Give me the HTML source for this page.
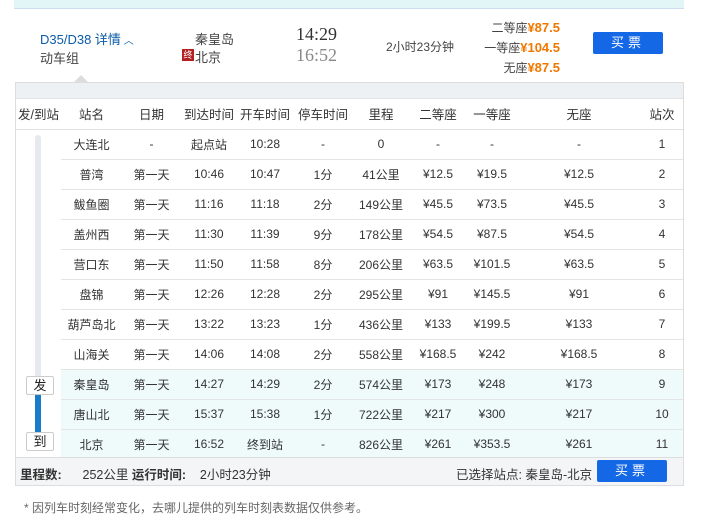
<!DOCTYPE html>
<html><head><meta charset="utf-8"><style>
*{margin:0;padding:0;box-sizing:border-box}
body{width:707px;height:511px;background:#fff;font-family:"Liberation Sans","Noto Sans CJK SC",sans-serif;font-size:12px;color:#333;position:relative;overflow:hidden}
.abs{position:absolute}
.topbar{left:14px;top:0;width:670px;height:9px;background:#e3f6f7;border-bottom:1px solid #cde}
.btn{background:#1468e6;color:#fff;border-radius:2px;text-align:center;font-size:13px;letter-spacing:4px}
.panel{left:15px;top:82px;width:669px;height:404px;border:1px solid #ddd;background:#fff}
.strip{left:0;top:0;width:667px;height:16px;background:#eef1f3;border-bottom:1px solid #e2e2e2}
table{position:absolute;left:0;top:16px;border-collapse:collapse;table-layout:fixed;width:667px}
td{height:30px;text-align:center;font-size:12px;color:#333;white-space:nowrap;padding:0}
tr.r td.d{border-top:1px solid #e4e4e4}
tr.h td{border-bottom:1px solid #e0e0e0;height:30px;font-size:12.5px}
tr.sel td.d{background:#effbfb}
.foot{left:0;top:374px;width:667px;height:28px;background:#f3f5f6;border-top:1px solid #ddd}
.tag{width:28px;height:19px;background:#fff;border:1px solid #ccc;border-radius:2px;font-size:13px;text-align:center;line-height:17px;color:#222}
</style></head><body>
<div class="abs topbar"></div>
<div class="abs" style="left:40px;top:29px;color:#0b5ba8;font-size:13px">D35/D38 详情<span style="font-size:10px"> ︿</span></div>
<div class="abs" style="left:40px;top:48px;font-size:13px;color:#444">动车组</div>
<div class="abs" style="left:195px;top:29px;font-size:13px;color:#444">秦皇岛</div>
<div class="abs" style="left:182px;top:49px;width:12px;height:12px;background:#b42020;color:#fff;font-size:9px;line-height:12px;text-align:center">终</div>
<div class="abs" style="left:195px;top:47px;font-size:13px;color:#444">北京</div>
<div class="abs" style="left:296px;top:24px;font-family:'Liberation Serif',serif;font-size:18px;color:#333">14:29</div>
<div class="abs" style="left:296px;top:45px;font-family:'Liberation Serif',serif;font-size:18px;color:#888">16:52</div>
<div class="abs" style="left:386px;top:38px;font-size:12px;color:#444">2小时23分钟</div>
<div class="abs" style="left:460px;top:18px;width:100px;text-align:right;line-height:19px;font-size:12px;color:#444">二等座<b style="color:#f07800;font-size:13px">¥87.5</b><br>一等座<b style="color:#f07800;font-size:13px">¥104.5</b><br>无座<b style="color:#f07800;font-size:13px">¥87.5</b></div>
<div class="abs btn" style="left:593px;top:32px;width:70px;height:22px;line-height:22px">买票</div>
<div class="abs" style="left:74px;top:75px;width:0;height:0;border-left:7px solid transparent;border-right:7px solid transparent;border-bottom:7px solid #ddd"></div>
<div class="abs panel">
<div class="abs strip"></div>
<table>
<colgroup><col style="width:45px"><col style="width:61px"><col style="width:59px"><col style="width:56px"><col style="width:56px"><col style="width:60px"><col style="width:56px"><col style="width:58px"><col style="width:50px"><col style="width:124px"><col style="width:42px"></colgroup>
<tr class="h"><td>发/到站</td><td>站名</td><td>日期</td><td>到达时间</td><td>开车时间</td><td>停车时间</td><td>里程</td><td>二等座</td><td>一等座</td><td>无座</td><td>站次</td></tr>
<tr><td></td><td class="d">大连北</td><td class="d">-</td><td class="d">起点站</td><td class="d">10:28</td><td class="d">-</td><td class="d">0</td><td class="d">-</td><td class="d">-</td><td class="d">-</td><td class="d">1</td></tr>
<tr class="r"><td></td><td class="d">普湾</td><td class="d">第一天</td><td class="d">10:46</td><td class="d">10:47</td><td class="d">1分</td><td class="d">41公里</td><td class="d">¥12.5</td><td class="d">¥19.5</td><td class="d">¥12.5</td><td class="d">2</td></tr>
<tr class="r"><td></td><td class="d">鲅鱼圈</td><td class="d">第一天</td><td class="d">11:16</td><td class="d">11:18</td><td class="d">2分</td><td class="d">149公里</td><td class="d">¥45.5</td><td class="d">¥73.5</td><td class="d">¥45.5</td><td class="d">3</td></tr>
<tr class="r"><td></td><td class="d">盖州西</td><td class="d">第一天</td><td class="d">11:30</td><td class="d">11:39</td><td class="d">9分</td><td class="d">178公里</td><td class="d">¥54.5</td><td class="d">¥87.5</td><td class="d">¥54.5</td><td class="d">4</td></tr>
<tr class="r"><td></td><td class="d">营口东</td><td class="d">第一天</td><td class="d">11:50</td><td class="d">11:58</td><td class="d">8分</td><td class="d">206公里</td><td class="d">¥63.5</td><td class="d">¥101.5</td><td class="d">¥63.5</td><td class="d">5</td></tr>
<tr class="r"><td></td><td class="d">盘锦</td><td class="d">第一天</td><td class="d">12:26</td><td class="d">12:28</td><td class="d">2分</td><td class="d">295公里</td><td class="d">¥91</td><td class="d">¥145.5</td><td class="d">¥91</td><td class="d">6</td></tr>
<tr class="r"><td></td><td class="d">葫芦岛北</td><td class="d">第一天</td><td class="d">13:22</td><td class="d">13:23</td><td class="d">1分</td><td class="d">436公里</td><td class="d">¥133</td><td class="d">¥199.5</td><td class="d">¥133</td><td class="d">7</td></tr>
<tr class="r"><td></td><td class="d">山海关</td><td class="d">第一天</td><td class="d">14:06</td><td class="d">14:08</td><td class="d">2分</td><td class="d">558公里</td><td class="d">¥168.5</td><td class="d">¥242</td><td class="d">¥168.5</td><td class="d">8</td></tr>
<tr class="r sel"><td></td><td class="d">秦皇岛</td><td class="d">第一天</td><td class="d">14:27</td><td class="d">14:29</td><td class="d">2分</td><td class="d">574公里</td><td class="d">¥173</td><td class="d">¥248</td><td class="d">¥173</td><td class="d">9</td></tr>
<tr class="r sel"><td></td><td class="d">唐山北</td><td class="d">第一天</td><td class="d">15:37</td><td class="d">15:38</td><td class="d">1分</td><td class="d">722公里</td><td class="d">¥217</td><td class="d">¥300</td><td class="d">¥217</td><td class="d">10</td></tr>
<tr class="r sel"><td></td><td class="d">北京</td><td class="d">第一天</td><td class="d">16:52</td><td class="d">终到站</td><td class="d">-</td><td class="d">826公里</td><td class="d">¥261</td><td class="d">¥353.5</td><td class="d">¥261</td><td class="d">11</td></tr>
</table>
<div class="abs" style="left:19px;top:52px;width:6px;height:304px;background:#e6eaee;border-radius:3px"></div>
<div class="abs" style="left:19px;top:310px;width:6px;height:40px;background:#1a7bc9"></div>
<div class="abs tag" style="left:10px;top:293px">发</div>
<div class="abs tag" style="left:10px;top:349px">到</div>
<div class="abs foot">
<div class="abs" style="left:4px;top:6px;font-size:12.5px;color:#333"><b>里程数:</b>&nbsp;&nbsp;&nbsp;&nbsp;&nbsp;&nbsp;252公里 <b>运行时间:</b>&nbsp;&nbsp;&nbsp;&nbsp;2小时23分钟</div>
<div class="abs" style="left:440px;top:6px;font-size:12.5px;color:#333">已选择站点: 秦皇岛-北京</div>
<div class="abs btn" style="left:581px;top:2px;width:70px;height:22px;line-height:22px">买票</div>
</div>
</div>
<div class="abs" style="left:24px;top:499px;font-size:12px;color:#666">* 因列车时刻经常变化，去哪儿提供的列车时刻表数据仅供参考。</div>
</body></html>
